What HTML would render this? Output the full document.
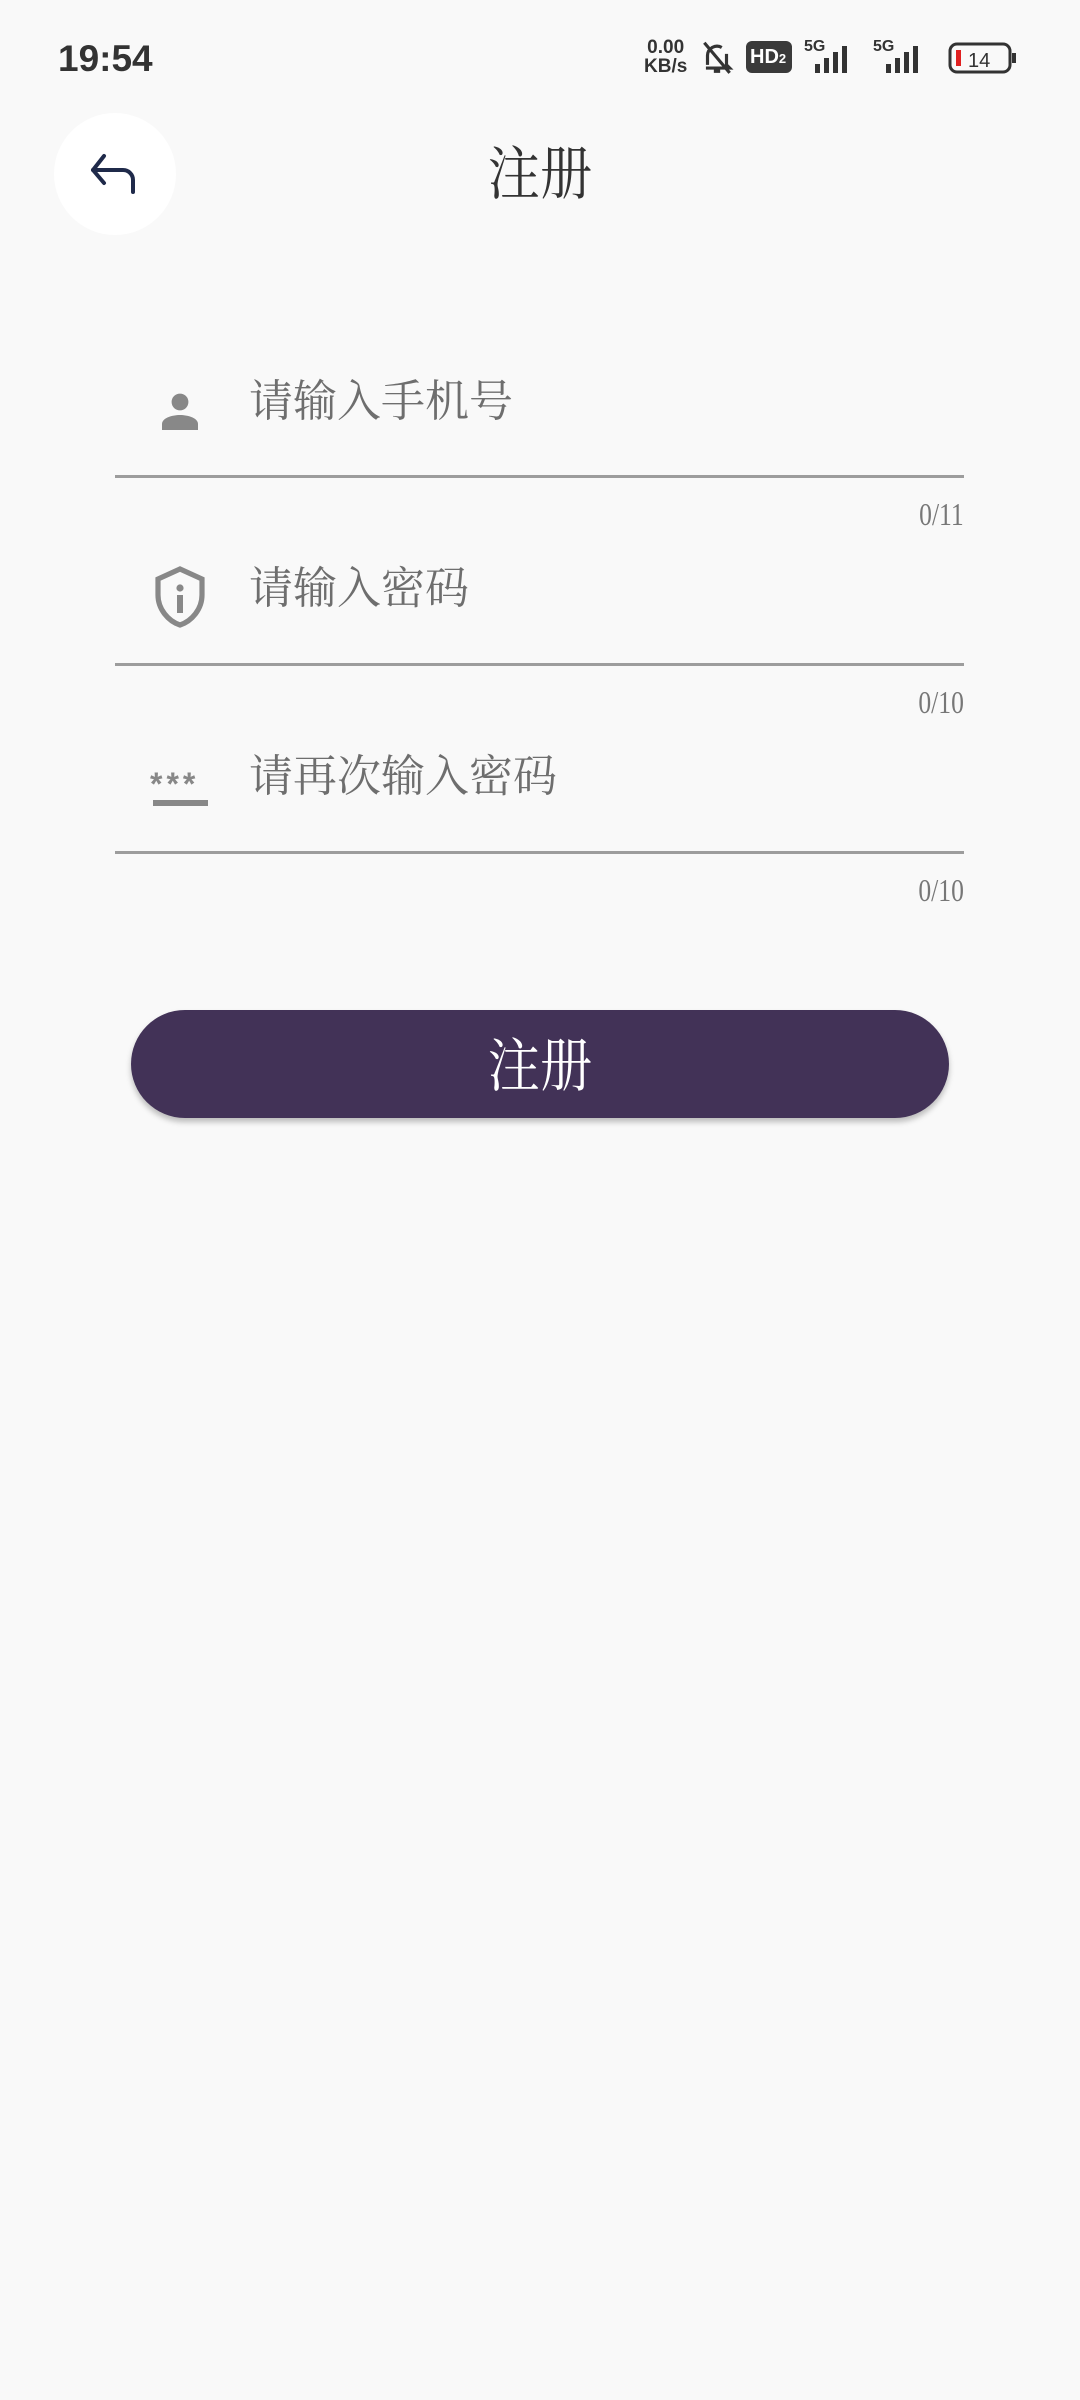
<!DOCTYPE html>
<html><head><meta charset="utf-8"><style>
*{margin:0;padding:0;box-sizing:border-box}
body{width:1080px;height:2400px;background:#f9f9f9;position:relative;overflow:hidden;font-family:"Liberation Serif","Noto Serif CJK SC",serif}
.abs{position:absolute}
.sb{font-family:"Liberation Sans",sans-serif;color:#333;font-weight:bold}
.ph{position:absolute;left:249px;font-size:44px;color:#6e6e6e;line-height:1}
.line{position:absolute;left:115px;width:849px;height:3px;background:#9d9d9d}
.cnt{position:absolute;right:116px;font-size:32px;color:#777;line-height:1;transform:scaleX(.8);transform-origin:right center}
</style></head><body>
<div class="abs sb" style="left:58px;top:38px;font-size:37px;font-weight:600">19:54</div>
<div class="abs sb" style="left:644px;top:38px;font-size:19px;line-height:19px;text-align:center">0.00<br>KB/s</div>
<svg class="abs" style="left:698px;top:38px" width="38" height="38" viewBox="0 0 24 24" fill="none" stroke="#333" stroke-width="2"><path d="M6 17V11a6 6 0 0 1 9-5M18 10v7l2 2H5M10 21h4M4 3l16 19"/></svg>
<div class="abs sb" style="left:746px;top:41px;width:46px;height:32px;background:#3a3a3a;border-radius:6px;color:#fff;font-size:20px;line-height:32px;padding-left:4px">HD<span style="font-size:13px">2</span></div>
<div class="abs sb" style="left:804px;top:38px;font-size:16px">5G</div>
<svg class="abs" style="left:803px;top:40px" width="64" height="34"><g fill="#333"><rect x="12" y="24" width="5" height="9"/><rect x="21" y="18" width="5" height="15"/><rect x="30" y="12" width="5" height="21"/><rect x="39" y="6" width="5" height="27"/></g></svg>
<div class="abs sb" style="left:873px;top:38px;font-size:16px">5G</div>
<svg class="abs" style="left:880px;top:40px" width="56" height="34"><g fill="#333"><rect x="6" y="24" width="5" height="9"/><rect x="15" y="18" width="5" height="15"/><rect x="24" y="12" width="5" height="21"/><rect x="33" y="6" width="5" height="27"/></g></svg>
<svg class="abs" style="left:948px;top:42px" width="70" height="32"><rect x="2" y="2" width="60" height="28" rx="7" fill="none" stroke="#333" stroke-width="3"/><rect x="8" y="8" width="5" height="16" fill="#e02020"/><rect x="64" y="11" width="4" height="10" fill="#333"/><text x="20" y="25" font-family="Liberation Sans" font-size="20" fill="#333">14</text></svg>

<div class="abs" style="left:54px;top:113px;width:122px;height:122px;border-radius:50%;background:#fff"></div>
<svg class="abs" style="left:88px;top:150px" width="54" height="50" viewBox="0 0 54 50" fill="none" stroke="#1f2a4a" stroke-width="4" stroke-linecap="round" stroke-linejoin="round"><path d="M16 6L5 20l11 13"/><path d="M5 20h30a10 10 0 0 1 10 10v12"/></svg>
<div class="abs" style="left:0;width:1080px;top:146px;text-align:center;font-size:58px;color:#333;line-height:1"><span style="display:inline-block;transform:scaleX(.9)">注册</span></div>

<svg class="abs" style="left:156px;top:386px" width="48" height="48" viewBox="0 0 24 24"><circle cx="12" cy="8" r="4.2" fill="#888"/><path d="M3 22v-3c0-3 5-4.5 9-4.5s9 1.5 9 4.5v3z" fill="#888"/></svg>
<div class="ph" style="top:380px">请输入手机号</div>
<div class="line" style="top:475px"></div>
<div class="cnt" style="top:498px">0/11</div>

<svg class="abs" style="left:152px;top:565px" width="56" height="64" viewBox="0 0 28 32"><path d="M14 2L3 7v8c0 7 5 13 11 15 6-2 11-8 11-15V7z" fill="none" stroke="#888" stroke-width="2.6"/><circle cx="14" cy="11.5" r="1.8" fill="#888"/><rect x="12.5" y="15" width="3" height="9" fill="#888"/></svg>
<div class="ph" style="top:567px">请输入密码</div>
<div class="line" style="top:663px"></div>
<div class="cnt" style="top:686px">0/10</div>

<div class="abs" style="left:150px;top:766px;font-family:'Liberation Sans',sans-serif;font-size:32px;font-weight:bold;color:#888;letter-spacing:4px">***</div>
<div class="abs" style="left:153px;top:800px;width:55px;height:6px;background:#888"></div>
<div class="ph" style="top:755px">请再次输入密码</div>
<div class="line" style="top:851px"></div>
<div class="cnt" style="top:874px">0/10</div>

<div class="abs" style="left:131px;top:1010px;width:818px;height:108px;border-radius:54px;background:#423257;box-shadow:0 4px 6px rgba(0,0,0,.25)"></div>
<div class="abs" style="left:0;width:1080px;top:1038px;text-align:center;font-size:58px;color:#fff;line-height:1"><span style="display:inline-block;transform:scaleX(.9)">注册</span></div>
</body></html>
